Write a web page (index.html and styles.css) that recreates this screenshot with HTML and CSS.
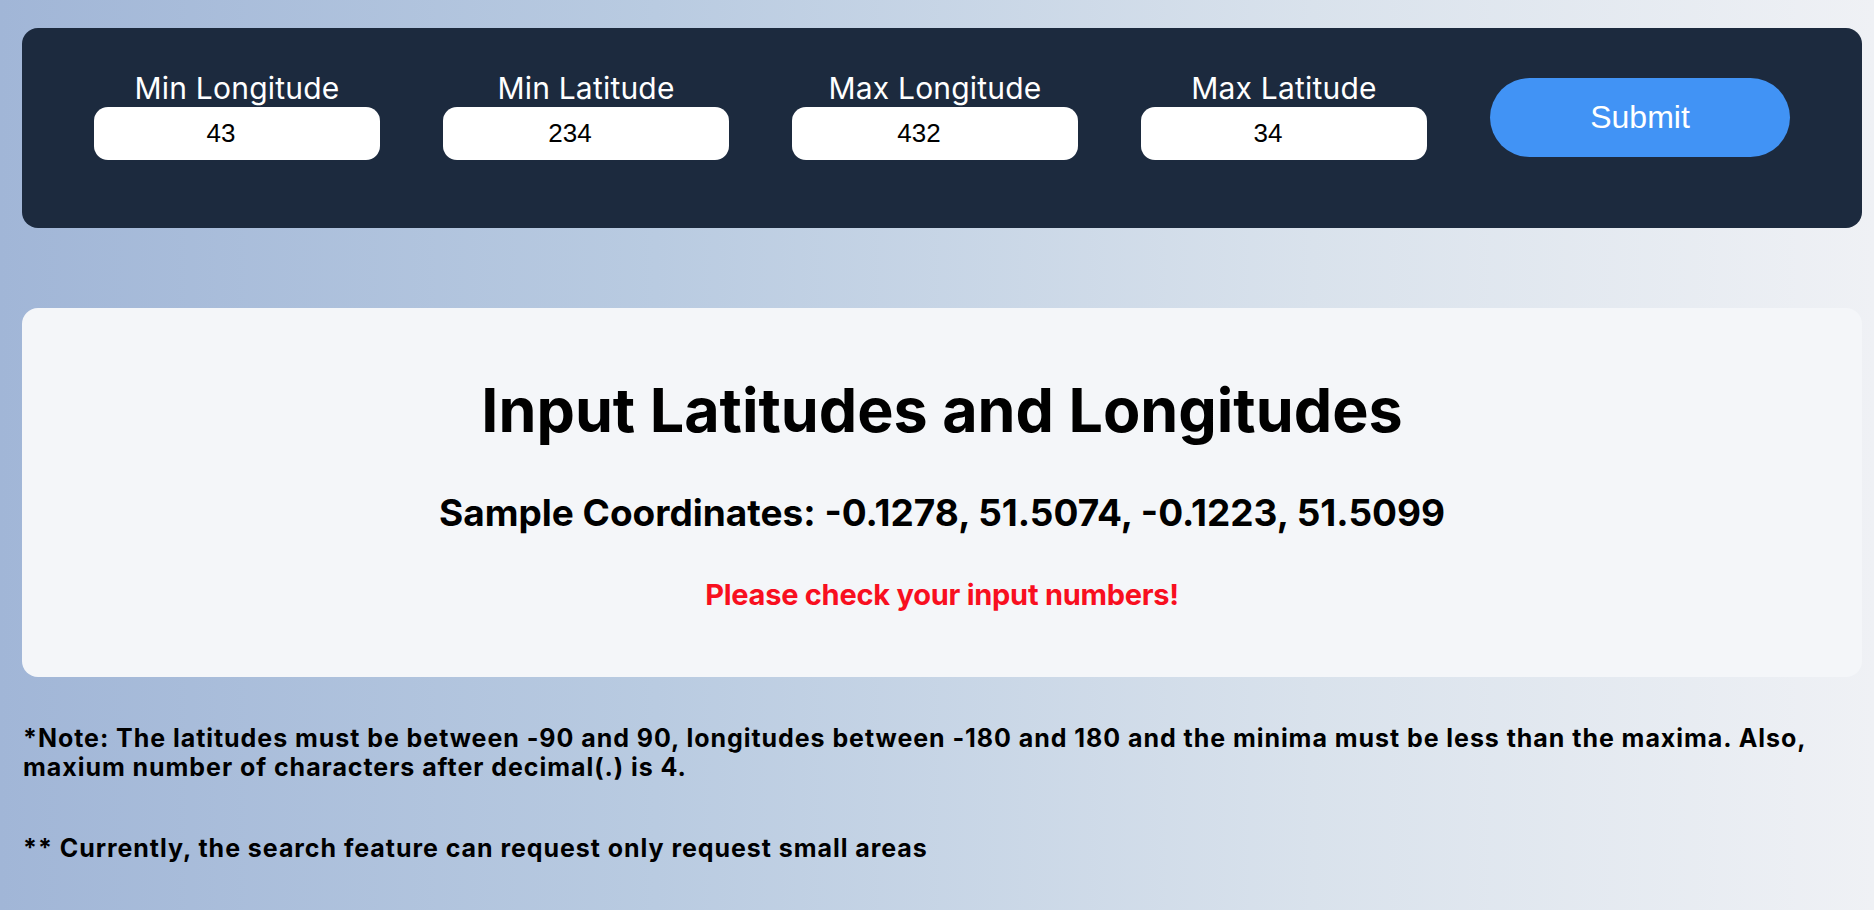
FILE: index.html
```html
<!DOCTYPE html>
<html lang="en">
<head>
<meta charset="utf-8">
<title>Coordinates search</title>
<link rel="stylesheet" href="styles.css">
</head>
<body>
<main class="page">
  <form class="search-bar">
    <div class="field">
      <label class="field-label">Min Longitude</label>
      <input class="coord-input" type="text" value="43">
    </div>
    <div class="field">
      <label class="field-label">Min Latitude</label>
      <input class="coord-input" type="text" value="234">
    </div>
    <div class="field">
      <label class="field-label">Max Longitude</label>
      <input class="coord-input" type="text" value="432">
    </div>
    <div class="field">
      <label class="field-label">Max Latitude</label>
      <input class="coord-input" type="text" value="34">
    </div>
    <button class="submit-btn" type="button">Submit</button>
  </form>

  <section class="card">
    <h1 class="card-title">Input Latitudes and Longitudes</h1>
    <h2 class="card-sample">Sample Coordinates: -0.1278, 51.5074, -0.1223, 51.5099</h2>
    <p class="card-error">Please check your input numbers!</p>
  </section>

  <p class="note">*Note: The latitudes must be between -90 and 90, longitudes between -180 and 180 and the minima must be less than the maxima. Also, maxium number of characters after decimal(.) is 4.</p>
  <p class="note note-second">** Currently, the search feature can request only request small areas</p>
</main>
</body>
</html>
```

FILE: styles.css
```css
html, body {
  margin: 0;
  padding: 0;
}

body {
  font-family: Inter, "Noto Sans", sans-serif;
  color: #000;
}

.page {
  box-sizing: border-box;
  min-height: 100vh;
  padding: 28px 12px 1px 22px;
  background: linear-gradient(to right, #a1b6d7 0%, #b9cbe1 35%, #d9e2ec 70%, #eff1f5 100%);
}

.search-bar {
  box-sizing: border-box;
  height: 200px;
  padding-bottom: 27px;
  display: flex;
  align-items: center;
  justify-content: center;
  gap: 63px;
  background: #1c2a3e;
  border-radius: 16px;
}

.field {
  display: flex;
  flex-direction: column;
  align-items: center;
  gap: 1px;
}

.field-label {
  color: #fff;
  font-size: 30px;
  line-height: 36px;
  font-weight: 400;
  letter-spacing: 0.2px;
  white-space: nowrap;
}

.coord-input {
  box-sizing: border-box;
  width: 286px;
  height: 53px;
  border: none;
  border-radius: 14px;
  background: #fff;
  padding: 0 32px 0 0;
  font-family: "Liberation Sans", Arial, sans-serif;
  font-size: 26px;
  color: #000;
  text-align: center;
  outline: none;
}

.submit-btn {
  width: 300px;
  height: 79px;
  margin-top: 6px;
  border: none;
  border-radius: 40px;
  background: #4193f5;
  color: #fff;
  font-family: "Liberation Sans", Arial, sans-serif;
  font-size: 32px;
}

.card {
  margin-top: 80px;
  padding: 65px 20px 65px;
  background: #f4f6f9;
  border-radius: 16px;
  text-align: center;
}

.card-title {
  margin: 0;
  font-size: 61px;
  line-height: 74px;
  font-weight: 700;
}

.card-sample {
  margin: 44px 0 0;
  font-size: 37px;
  line-height: 44px;
  font-weight: 700;
}

.card-error {
  margin: 43px 0 0;
  font-size: 29px;
  line-height: 34px;
  font-weight: 700;
  letter-spacing: -0.25px;
  color: #f80f1f;
}

.note {
  margin: 47px 0 0 1px;
  font-size: 25px;
  line-height: 29px;
  font-weight: 700;
  letter-spacing: 0.95px;
}

.note-second {
  margin-top: 52px;
}
```
